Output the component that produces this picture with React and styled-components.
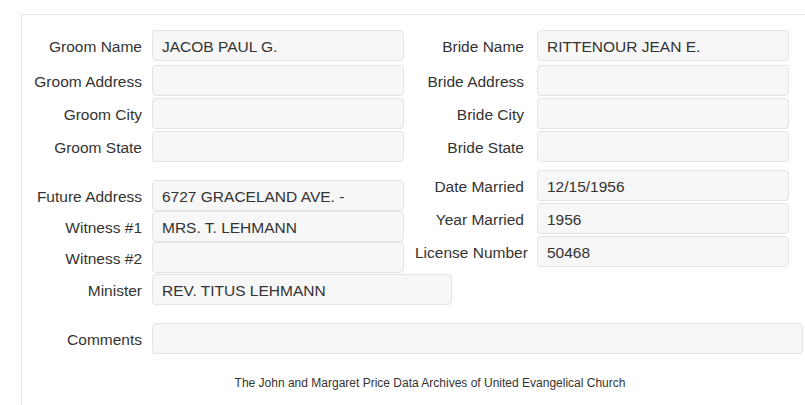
import React from 'react'
import styled, { createGlobalStyle } from 'styled-components'

const GlobalStyle = createGlobalStyle`
  html, body {
    margin: 0;
    padding: 0;
    background: #ffffff;
    font-family: 'Liberation Sans', Arial, sans-serif;
    color: #333333;
  }
`

const Panel = styled.div`
  margin: 14px 0 0 21px;
  border-top: 1px solid #e5e5e5;
  border-left: 1px solid #e5e5e5;
  padding-top: 15px;
  min-height: 400px;
  box-sizing: border-box;
`

const Section = styled.div`
  display: flex;
  flex-direction: column;
  gap: ${(p) => p.gap || '0px'};
  margin-top: ${(p) => p.top || '0px'};
  padding-top: ${(p) => p.padTop || '0px'};
`

const Columns = styled.div`
  display: flex;
  align-items: flex-start;
  margin-top: ${(p) => p.top || '0px'};
`

const Row = styled.div`
  display: flex;
  margin-bottom: ${(p) => p.bottom || '0px'};
  margin-top: ${(p) => p.top || '0px'};
`

const FieldWrap = styled.div`
  display: flex;
  align-items: center;
  margin-left: 11px;
  flex-shrink: 0;
`

const Label = styled.label`
  width: 109px;
  flex-shrink: 0;
  text-align: right;
  white-space: nowrap;
  font-size: 15.5px;
  padding-top: 2px;
  margin-right: ${(p) => p.gap || '10px'};
  color: #333333;
`

const Input = styled.input`
  box-sizing: border-box;
  width: ${(p) => p.w || '252px'};
  height: 31px;
  border: 1px solid #e3e3e3;
  border-radius: 4px;
  background: #f7f7f7;
  padding: 2px 9px 0;
  font-family: 'Liberation Sans', Arial, sans-serif;
  font-size: 15.5px;
  color: #333333;
  outline: none;
  flex-shrink: 0;
`

const Footer = styled.div`
  margin-top: 22px;
  padding-left: 33px;
  text-align: center;
  font-size: 12px;
  line-height: 14px;
  color: #333333;
`

function Field({ label, value = '', gap, w }) {
  return (
    <FieldWrap>
      <Label gap={gap}>{label}</Label>
      <Input readOnly value={value} w={w} />
    </FieldWrap>
  )
}

export default function App() {
  return (
    <>
      <GlobalStyle />
      <Panel>
        <Section gap="2px">
          <Row bottom="2px">
            <Field label="Groom Name" value="JACOB PAUL G." />
            <Field label="Bride Name" value="RITTENOUR JEAN E." gap="13px" />
          </Row>
          <Row>
            <Field label="Groom Address" />
            <Field label="Bride Address" gap="13px" />
          </Row>
          <Row>
            <Field label="Groom City" />
            <Field label="Bride City" gap="13px" />
          </Row>
          <Row>
            <Field label="Groom State" />
            <Field label="Bride State" gap="13px" />
          </Row>
        </Section>

        <Columns top="8px">
          <Section padTop="10px">
            <Field label="Future Address" value="6727 GRACELAND AVE. -" />
            <Field label="Witness #1" value="MRS. T. LEHMANN" />
            <Field label="Witness #2" />
          </Section>
          <Section gap="2px">
            <Field label="Date Married" value="12/15/1956" gap="13px" />
            <Field label="Year Married" value="1956" gap="13px" />
            <Field label="License Number" value="50468" gap="13px" />
          </Section>
        </Columns>

        <Row top="1px">
          <Field label="Minister" value="REV. TITUS LEHMANN" w="300px" />
        </Row>

        <Row top="18px">
          <Field label="Comments" w="651px" />
        </Row>

        <Footer>The John and Margaret Price Data Archives of United Evangelical Church</Footer>
      </Panel>
    </>
  )
}
